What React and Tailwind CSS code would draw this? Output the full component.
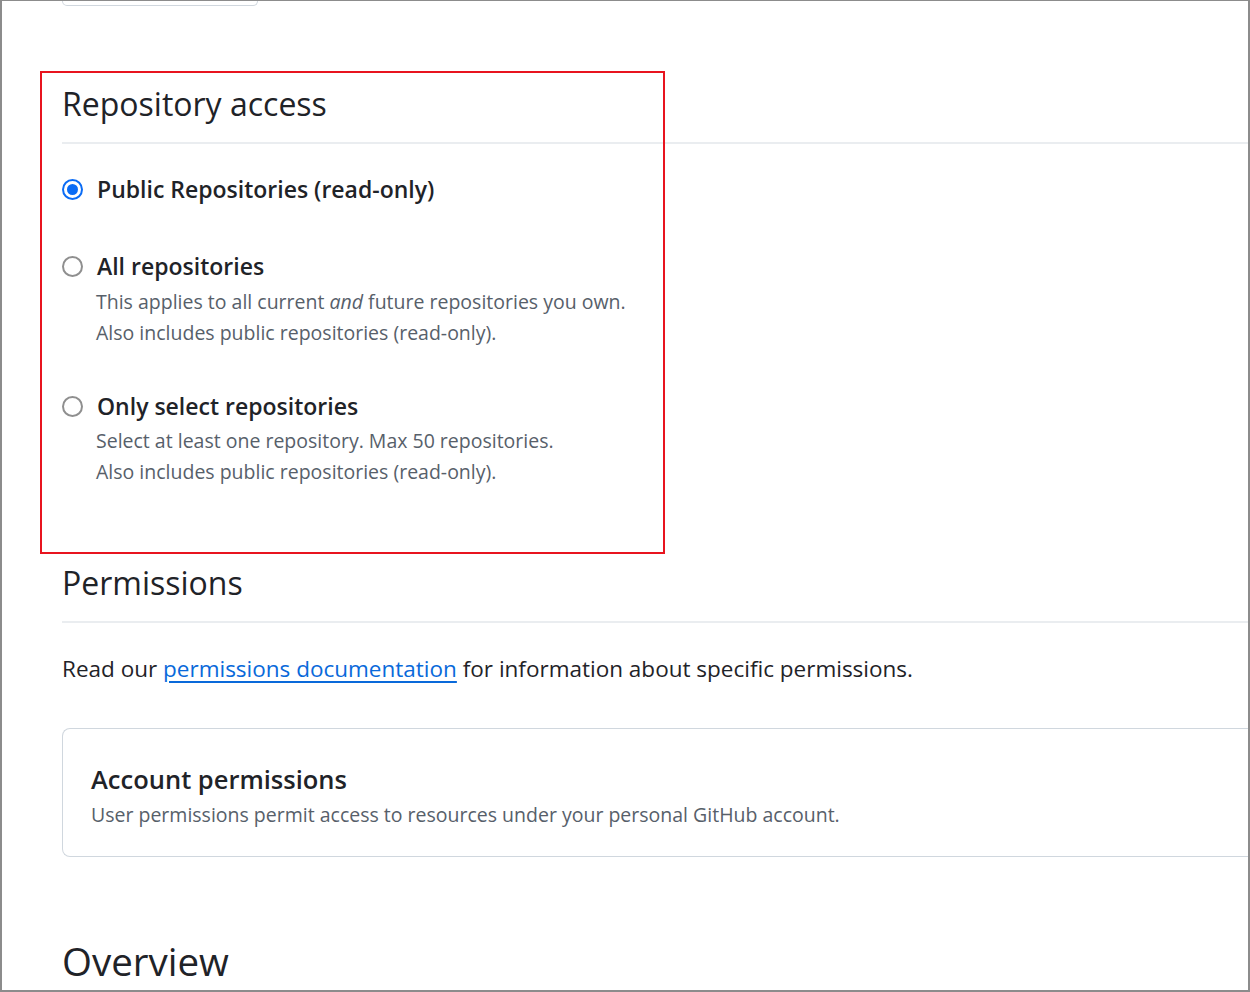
import React from "react";

function Radio({ checked }) {
  if (checked) {
    return (
      <span className="flex h-[21px] w-[21px] shrink-0 items-center justify-center rounded-full border-2 border-[#0b6cf5] bg-white">
        <span className="h-[11px] w-[11px] rounded-full bg-[#0b6cf5]" />
      </span>
    );
  }
  return <span className="h-[21px] w-[21px] shrink-0 rounded-full border-2 border-[#8f8f8f] bg-white" />;
}

export default function App() {
  return (
    <div className="relative h-[992px] w-[1250px] overflow-hidden border-b-2 border-l-2 border-r-2 border-t border-[#8c8c8c] bg-white font-['Open_Sans',sans-serif] text-[#1f2328]">
      <div className="pl-[60px]">
        <div className="h-[5px] w-[196px] rounded-b-md border border-t-0 border-[#d0d7de]" />

        <h2 className="mt-[78px] text-[32px] font-normal leading-[40px]">Repository access</h2>
        <div className="mt-[18px] h-[2px] bg-[#eaedf0]" />

        <div className="mt-[30px] flex items-center gap-[14px]">
          <Radio checked />
          <span className="text-[23px] font-semibold leading-[30px]">Public Repositories (read-only)</span>
        </div>

        <div className="mt-[47px] flex items-center gap-[14px]">
          <Radio />
          <span className="text-[23px] font-semibold leading-[30px]">All repositories</span>
        </div>
        <div className="mt-[5px] pl-[34px] text-[19.5px] leading-[31px] text-[#57606a]">
          <p>
            This applies to all current <em>and</em> future repositories you own.
          </p>
          <p>Also includes public repositories (read-only).</p>
        </div>

        <div className="mt-[43px] flex items-center gap-[14px]">
          <Radio />
          <span className="text-[23px] font-semibold leading-[30px]">Only select repositories</span>
        </div>
        <div className="mt-[4px] pl-[34px] text-[19.5px] leading-[31px] text-[#57606a]">
          <p>Select at least one repository. Max 50 repositories.</p>
          <p>Also includes public repositories (read-only).</p>
        </div>

        <h2 className="mt-[76px] text-[32px] font-normal leading-[40px]">Permissions</h2>
        <div className="mt-[18px] h-[2px] bg-[#eaedf0]" />

        <p className="mt-[31px] text-[22.5px] leading-[30px]">
          Read our{" "}
          <a className="text-[#0969da] underline decoration-[#0969da] underline-offset-[4px]" href="#">
            permissions documentation
          </a>{" "}
          for information about specific permissions.
        </p>

        <div className="mt-[44px] rounded-l-lg border border-r-0 border-[#d0d7de] pb-[27px] pl-[28px] pt-[34px]">
          <h3 className="text-[25.5px] font-semibold leading-[32px]">Account permissions</h3>
          <p className="mt-[6px] text-[19.5px] leading-[28px] text-[#57606a]">
            User permissions permit access to resources under your personal GitHub account.
          </p>
        </div>

        <h2 className="mt-[80px] text-[38.5px] font-normal leading-[48px]">Overview</h2>
      </div>

      <div className="pointer-events-none absolute left-[38px] top-[70px] h-[483px] w-[625px] border-2 border-[#e8141f]" />
    </div>
  );
}
